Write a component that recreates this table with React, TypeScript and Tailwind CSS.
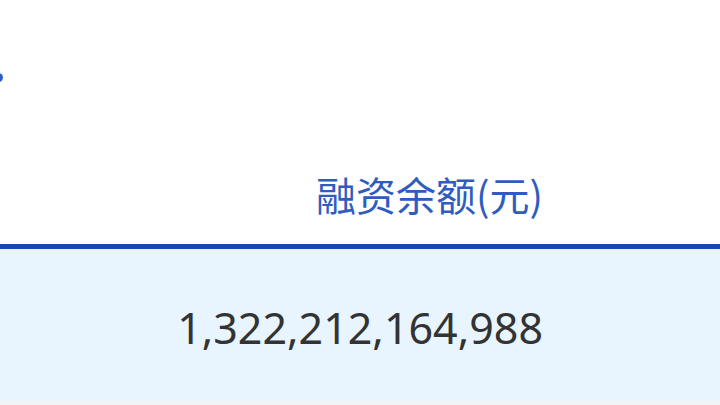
import React from "react";

export default function App() {
  return (
    <div className="relative w-[720px] h-[405px] overflow-hidden bg-white">
      <span className="absolute left-[-6px] top-[73px] w-[9px] h-[9px] rounded-full bg-[#2a5fc9]" />
      <div className="flex h-[244px] items-end justify-end pr-[177px] pb-[30px]">
        <span
          className="text-[40px] leading-none text-[#2f5cbf]"
          style={{ fontFamily: '"Noto Sans CJK SC", "Noto Sans", sans-serif' }}
        >
          融资余额(元)
        </span>
      </div>
      <div className="h-[5px] bg-[#1447b0]" />
      <div className="flex h-[152px] items-center justify-end bg-[#e8f5ff] pr-[177px] pt-[4px]">
        <span
          className="text-[43px] leading-none text-[#333333]"
          style={{ fontFamily: '"Noto Sans", sans-serif' }}
        >
          1,322,212,164,988
        </span>
      </div>
      <div className="h-[4px] bg-[#f3f3f3]" />
    </div>
  );
}
